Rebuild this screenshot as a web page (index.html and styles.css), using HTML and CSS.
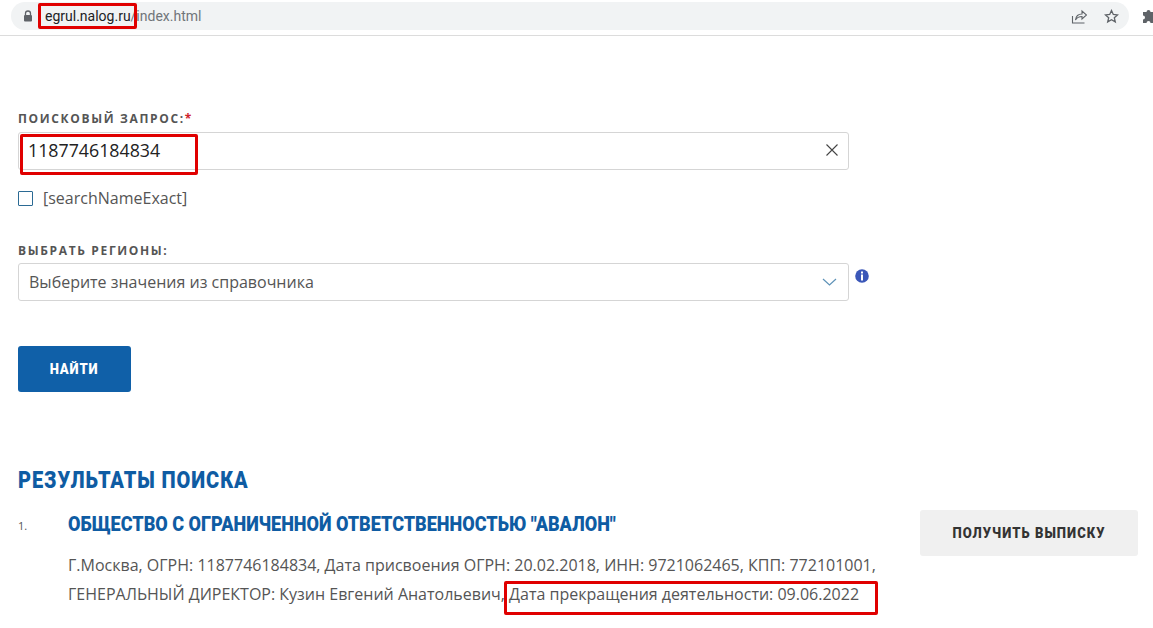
FILE: index.html
```html
<!DOCTYPE html>
<html lang="ru">
<head>
    <meta charset="UTF-8">
    <meta name="viewport" content="width=device-width, initial-scale=1.0">
    <title>egrul.nalog.ru</title>
    <link rel="stylesheet" href="styles.css">
</head>
<body>

    <header class="browser-bar">
        <div class="omnibox">
            <svg class="lock-icon" width="10" height="12" viewBox="0 0 10 12">
                <path d="M2.5 5V3.5a2.5 2.5 0 0 1 5 0V5" fill="none" stroke="#5f6368" stroke-width="1.3"/>
                <rect x="1" y="5" width="8" height="6.5" rx="1" fill="#5f6368"/>
            </svg>
            <span class="url"><span class="url-host">egrul.nalog.ru</span>/index.html</span>
            <svg class="share-icon" width="16" height="16" viewBox="0 0 16 16" fill="none" stroke="#5f6368" stroke-width="1.1">
                <path d="M1.5 8v7h12"/>
                <path d="M4.5 12c.5-4 3-6 6.500-6V3l4.500 4-4.500 4V8.500c-3 0-5 1-6.500 3.500z"/>
            </svg>
            <svg class="star-icon" width="15" height="15" viewBox="0 0 15 15" fill="none" stroke="#5f6368" stroke-width="1.3">
                <path d="M7.500 1.500l1.800 4 4.200.4-3.200 2.800 1 4.200-3.800-2.200-3.800 2.200 1-4.200L1.500 5.900l4.200-.4z"/>
            </svg>
        </div>
        <svg class="puzzle-icon" width="14" height="16" viewBox="0 0 14 16">
            <path d="M0 4h3.500a2 2 0 0 1 4 0H11v3.500a2 2 0 0 1 0 4V15H7.500a2 2 0 0 0-4 0H0v-3.500a2 2 0 0 0 0-4z" fill="#5f6368"/>
        </svg>
    </header>

    <main class="page">
        <form class="search-form">
            <div class="field field-query">
                <label class="field-label">Поисковый запрос:<span class="required">*</span></label>
                <div class="input-box input-query">
                    <span class="input-value">1187746184834</span>
                    <svg width="14" height="14" viewBox="0 0 14 14" stroke="#444" stroke-width="1.1">
                        <path d="M1.500 1.500l11 11M12.500 1.500l-11 11"/>
                    </svg>
                </div>
            </div>

            <div class="check-row">
                <span class="checkbox"></span>
                <span class="check-label">[searchNameExact]</span>
            </div>

            <div class="field field-region">
                <label class="field-label">Выбрать регионы:</label>
                <div class="select-row">
                    <div class="input-box input-select">
                        <span class="select-value">Выберите значения из справочника</span>
                        <svg width="15" height="8" viewBox="0 0 15 8" fill="none" stroke="#5f93b8" stroke-width="1.2">
                            <path d="M1 1l6.500 6L14 1"/>
                        </svg>
                    </div>
                    <svg class="info-icon" width="14" height="14" viewBox="0 0 14 14">
                        <circle cx="7" cy="7" r="6.800" fill="#3b57b8"/>
                        <rect x="6" y="2.500" width="2" height="2" fill="#fff"/>
                        <rect x="6" y="5.500" width="2" height="6" fill="#fff"/>
                    </svg>
                </div>
            </div>

            <button class="btn-search" type="button"><span>Найти</span></button>
        </form>

        <section class="results">
            <h2 class="results-title"><span>Результаты поиска</span></h2>
            <div class="result-item">
                <div class="result-num">1.</div>
                <div class="result-body">
                    <div class="result-name"><span>Общество с ограниченной ответственностью "Авалон"</span></div>
                    <p class="result-text">Г.Москва, ОГРН: 1187746184834, Дата присвоения ОГРН: 20.02.2018, ИНН: 9721062465, КПП: 772101001, ГЕНЕРАЛЬНЫЙ ДИРЕКТОР: Кузин Евгений Анатольевич, Дата прекращения деятельности: 09.06.2022</p>
                </div>
                <button class="btn-extract" type="button"><span>Получить выписку</span></button>
            </div>
        </section>
    </main>

    <!-- red marks drawn over the screenshot -->
    <div class="mark mark-host"></div>
    <div class="mark mark-query"></div>
    <div class="mark mark-date"></div>

</body>
</html>
```

FILE: styles.css
```css
* {
    box-sizing: border-box;
}

html, body {
    height: 628px;
    overflow: hidden;
}

body {
    margin: 0;
    position: relative;
    font-family: "Open Sans", sans-serif;
    color: #444;
    background-color: #fff;
}

.browser-bar {
    height: 36px;
    display: flex;
    align-items: center;
    padding: 0 0 3px 11px;
    border-bottom: 1px solid #dcdcdc;
}

.omnibox {
    flex: none;
    width: 1118px;
    height: 28px;
    display: flex;
    align-items: center;
    padding: 0 10px 0 12px;
    border-radius: 14px;
    background-color: #f1f3f4;
}

.url {
    margin-left: 12px;
    flex: 1;
    font-family: Roboto, sans-serif;
    font-size: 14px;
    color: #70757a;
}

.url-host {
    color: #202124;
}

.share-icon {
    margin-right: 17px;
}

.puzzle-icon {
    flex: none;
    margin-left: 14px;
}

.page {
    padding: 0 15px 0 18px;
}

.search-form {
    padding-top: 76px;
}

.field-label {
    display: block;
    margin-bottom: 6px;
    font-size: 12px;
    line-height: 14px;
    font-weight: 700;
    letter-spacing: 1.65px;
    text-transform: uppercase;
    color: #555;
}

.required {
    color: #d0232b;
}

.input-box {
    width: 831px;
    height: 38px;
    display: flex;
    align-items: center;
    justify-content: space-between;
    border: 1px solid #d5d5d5;
    border-radius: 3px;
}

.input-query {
    padding: 0 9px 2px 9px;
}

.input-select {
    padding: 0 11px 0 10px;
}

.input-value {
    font-size: 17.8px;
    color: #222;
}

.select-value {
    font-size: 16px;
    color: #555;
}

.check-row {
    display: flex;
    align-items: center;
    margin-top: 18px;
}

.checkbox {
    width: 15px;
    height: 15px;
    border: 1.5px solid #2b6a94;
    border-radius: 1px;
}

.check-label {
    margin-left: 10px;
    font-size: 16px;
    line-height: 20px;
    color: #555;
}

.field-region {
    margin-top: 36px;
}

.field-region .field-label {
    margin-bottom: 5px;
}

.select-row {
    display: flex;
    align-items: flex-start;
}

.info-icon {
    margin: 6px 0 0 6px;
}

.btn-search {
    display: block;
    width: 113px;
    height: 46px;
    margin-top: 45px;
    padding: 0;
    border: 0;
    border-radius: 3px;
    background-color: #1060a8;
    color: #fff;
    font-family: Roboto, sans-serif;
    font-size: 15px;
    font-weight: 900;
    letter-spacing: 1px;
    text-transform: uppercase;
}

.btn-search span,
.btn-extract span,
.results-title span,
.result-name span {
    display: inline-block;
    white-space: nowrap;
    transform: scaleX(0.87);
}

.results {
    margin-top: 74px;
}

.results-title {
    margin: 0;
    font-family: Roboto, sans-serif;
    font-size: 23px;
    line-height: 30px;
    font-weight: 900;
    letter-spacing: 1.06px;
    text-transform: uppercase;
    color: #0f5ca3;
}

.results-title span,
.result-name span {
    transform-origin: left center;
}

.result-item {
    display: flex;
    align-items: flex-start;
    margin-top: 14px;
}

.result-num {
    width: 50px;
    padding-top: 8px;
    font-size: 11px;
    color: #555;
}

.result-body {
    width: 808px;
}

.result-name {
    font-family: Roboto, sans-serif;
    font-size: 20px;
    line-height: 28px;
    font-weight: 900;
    text-transform: uppercase;
    color: #0f5ca3;
}

.result-name span {
    transform: scaleX(0.902);
}

.result-text {
    margin: 13px 0 0;
    font-size: 16px;
    line-height: 29px;
    color: #555;
}

.btn-extract {
    flex: none;
    width: 218px;
    height: 46px;
    margin: 0 0 0 44px;
    padding: 0;
    border: 0;
    border-radius: 3px;
    background-color: #f0f0f0;
    color: #333;
    font-family: Roboto, sans-serif;
    font-size: 15px;
    font-weight: 900;
    letter-spacing: 1.2px;
    text-transform: uppercase;
}

.mark {
    position: absolute;
    border: 3px solid #e00000;
    border-radius: 2px;
}

.mark-host {
    left: 38px;
    top: 3px;
    width: 99px;
    height: 26px;
}

.mark-query {
    left: 20px;
    top: 134px;
    width: 178px;
    height: 41px;
}

.mark-date {
    left: 504px;
    top: 581px;
    width: 374px;
    height: 34px;
}
```
